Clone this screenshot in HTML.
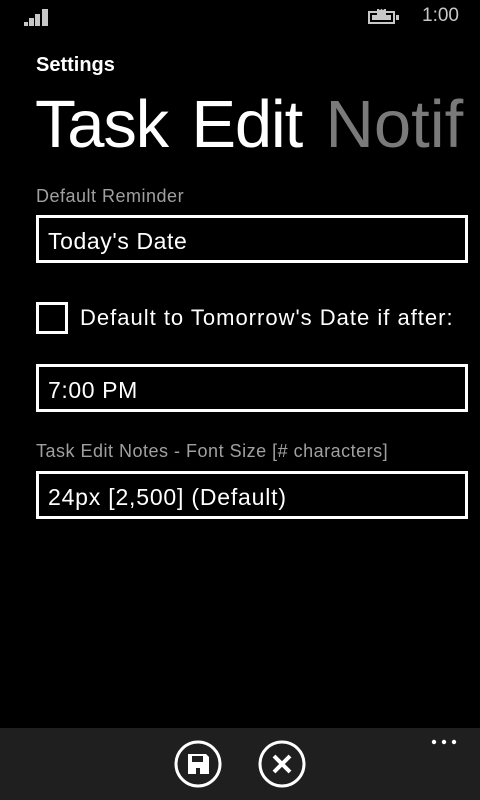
<!DOCTYPE html>
<html><head><style>
body{margin:0;width:480px;height:800px;background:#000;color:#fff;font-family:"Liberation Sans",sans-serif;position:relative;overflow:hidden}
.a{position:absolute;white-space:nowrap}
.box{position:absolute;left:36px;width:426px;border:3px solid #fff;height:42px;box-sizing:content-box}
.box span{position:absolute;left:9px;top:10px;font-size:23px;letter-spacing:0.6px}
.lbl{font-size:18px;color:#a0a0a0;letter-spacing:0.5px}
</style></head><body>
<svg class="a" style="left:24px;top:7px" width="30" height="20"><g fill="#c8c8c8"><rect x="0" y="15" width="4" height="4"/><rect x="5" y="11" width="5" height="8"/><rect x="11" y="7" width="5" height="12"/><rect x="18" y="2" width="6" height="17"/></g></svg>
<svg class="a" style="left:367px;top:7px" width="34" height="20"><rect x="2" y="5" width="25" height="11" fill="none" stroke="#c8c8c8" stroke-width="2"/><rect x="29" y="8" width="3" height="5" fill="#c8c8c8"/><rect x="5" y="8" width="19" height="5" fill="#c8c8c8"/><path d="M10 2h9v8h-9z" fill="#c8c8c8"/><path d="M13 0v3M16 0v3" stroke="#000" stroke-width="1.5"/></svg>
<div class="a" style="left:422px;top:5px;font-size:19px;color:#c8c8c8">1:00</div>
<div class="a" style="left:36px;top:54px;font-size:20px;font-weight:bold">Settings</div>
<div class="a" style="left:35px;top:86px;font-size:67px;letter-spacing:-1.2px;word-spacing:6px">Task Edit <span style="color:#7a7a7a;letter-spacing:0">Notif</span></div>
<div class="a lbl" style="left:36px;top:186px">Default Reminder</div>
<div class="box" style="top:215px"><span>Today's Date</span></div>
<div class="a" style="left:36px;top:302px;width:26px;height:26px;border:3px solid #fff"></div>
<div class="a" style="left:80px;top:305px;font-size:22px;letter-spacing:1px">Default to Tomorrow's Date if after:</div>
<div class="box" style="top:364px"><span>7:00 PM</span></div>
<div class="a lbl" style="left:36px;top:441px">Task Edit Notes - Font Size [# characters]</div>
<div class="box" style="top:471px"><span style="letter-spacing:0.8px">24px [2,500] (Default)</span></div>
<div class="a" style="left:0;top:728px;width:480px;height:72px;background:#1f1f1f"></div>
<svg class="a" style="left:0;top:728px" width="480" height="72">
<g fill="none" stroke="#fff" stroke-width="3"><circle cx="198" cy="36" r="22"/><circle cx="282" cy="36" r="22"/><path d="M274 28l16 16M290 28l-16 16" stroke-width="4"/></g>
<path d="M188 26h18l3 3v17h-21z" fill="#fff"/><rect x="192" y="28" width="11" height="6" fill="#1f1f1f"/><rect x="196" y="40" width="4" height="6" fill="#1f1f1f"/>
<g fill="#fff"><circle cx="434" cy="14" r="2.2"/><circle cx="444" cy="14" r="2.2"/><circle cx="454" cy="14" r="2.2"/></g>
</svg>
</body></html>
